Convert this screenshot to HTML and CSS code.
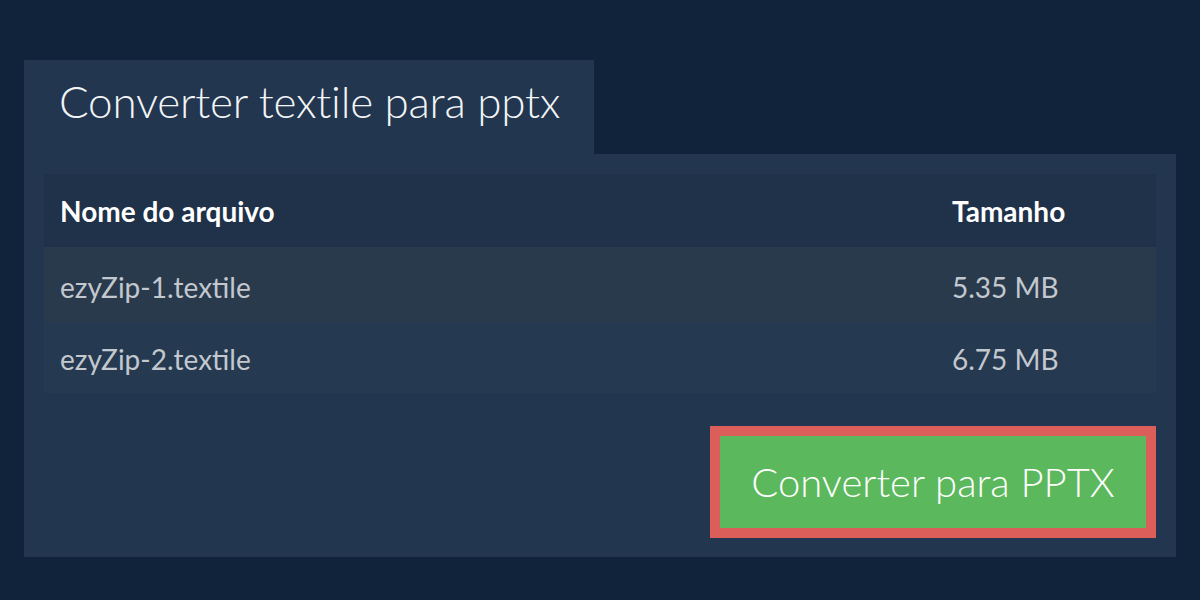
FILE: index.html
```html
<!DOCTYPE html>
<html lang="pt">
<head>
<meta charset="utf-8">
<link rel="stylesheet" href="styles.css">
</head>
<body>
<div class="wrap">
  <div class="tab">Converter textile para pptx</div>
  <div class="panel">
    <table class="files">
      <thead>
        <tr><th>Nome do arquivo</th><th class="size">Tamanho</th></tr>
      </thead>
      <tbody>
        <tr class="odd"><td>ezyZip-1.textile</td><td class="size">5.35 MB</td></tr>
        <tr class="even"><td>ezyZip-2.textile</td><td class="size">6.75 MB</td></tr>
      </tbody>
    </table>
    <div class="actions">
      <button class="convert">Converter para PPTX</button>
    </div>
  </div>
</div>
</body>
</html>
```

FILE: styles.css
```css
html, body {
  margin: 0;
  padding: 0;
  background: #11233a;
  font-family: Lato, "Noto Sans", sans-serif;
}
.wrap {
  display: flex;
  flex-direction: column;
  padding: 60px 24px 0 24px;
}
.tab {
  align-self: flex-start;
  background: #22364f;
  color: #f2f4f6;
  font-weight: 300;
  font-size: 44px;
  letter-spacing: -0.25px;
  height: 94px;
  line-height: 82px;
  padding: 0 34px 0 35px;
  box-sizing: border-box;
  width: 570px;
  white-space: nowrap;
}
.panel {
  background: #22364f;
  padding: 20px 20px 20px 20px;
  height: 403px;
  box-sizing: border-box;
}
.files {
  width: 100%;
  border-collapse: collapse;
}
.files th, .files td {
  text-align: left;
  padding: 0 0 0 16px;
  font-size: 28px;
}
.files th {
  font-weight: 700;
  color: #ffffff;
  height: 73px;
  background: #1f3249;
  line-height: 1;
}
.files td {
  color: #c3c8cf;
  line-height: 1;
}
.files .size {
  width: 204px;
}
.odd td {
  background: #2a3a4d;
  height: 75px;
  padding-top: 5px;
  box-sizing: border-box;
}
.even td {
  background: #253950;
  height: 71px;
  padding-top: 2px;
  box-sizing: border-box;
}
.actions {
  display: flex;
  justify-content: flex-end;
  margin-top: 33px;
}
.convert {
  width: 446px;
  height: 112px;
  border: 10px solid #db5e5b;
  background: #5cb85c;
  color: #ffffff;
  font-family: Lato, "Noto Sans", sans-serif;
  font-weight: 300;
  font-size: 40px;
  padding: 0;
  box-sizing: border-box;
}
```
